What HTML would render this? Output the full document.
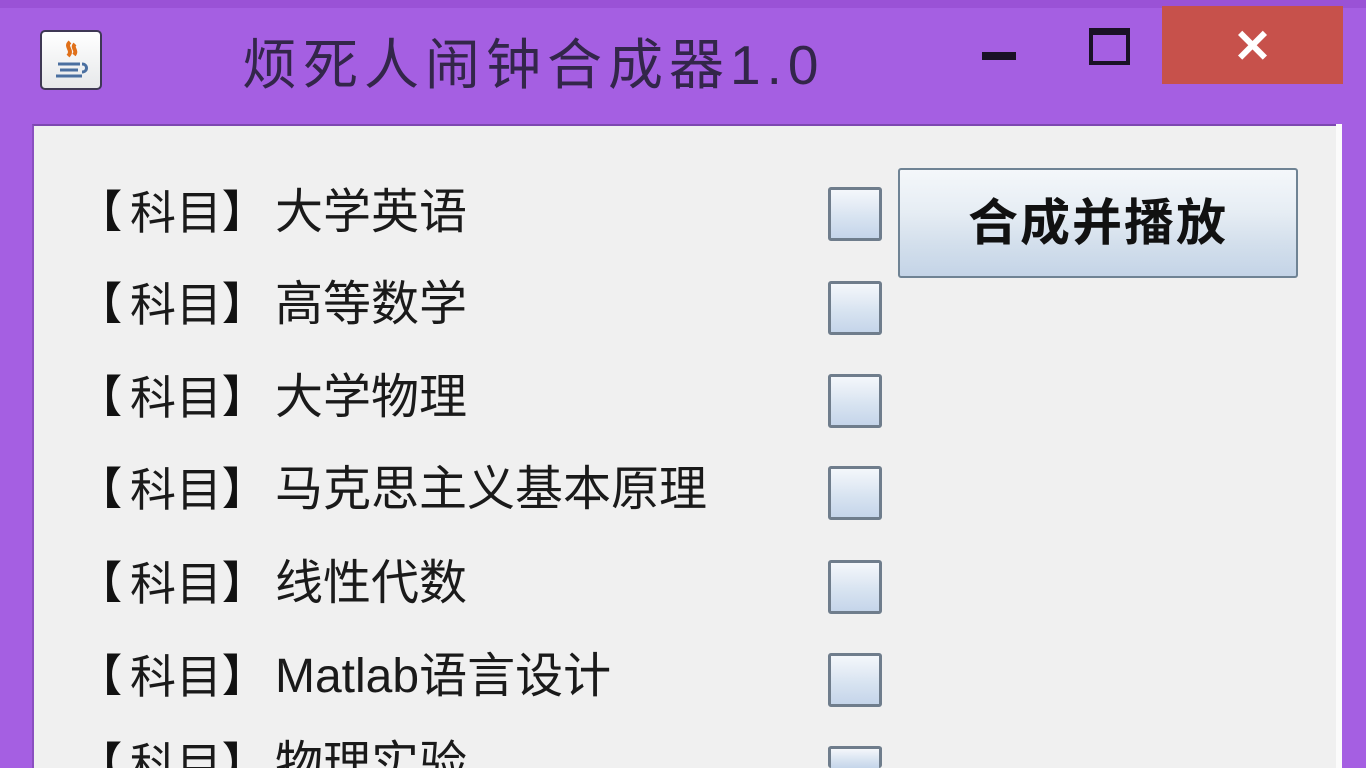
<!DOCTYPE html>
<html><head><meta charset="utf-8"><style>
html,body{margin:0;padding:0;width:1366px;height:768px;overflow:hidden;background:#a55fe2;font-family:"Liberation Sans","Noto Sans CJK SC","WenQuanYi Zen Hei",sans-serif;position:relative}
.abs{position:absolute}
#top{left:0;top:0;width:1366px;height:8px;background:#9a52d6}
#panel{left:32px;top:124px;width:1306px;height:644px;background:#f0f0f0;border-top:2px solid #7d48b0;border-left:2px solid #8a50c0;box-sizing:border-box}
#rb{left:1336px;top:124px;width:6px;height:644px;background:#fbfbfb}
.title{left:242px;top:32px;font-size:55px;letter-spacing:6px;color:#33264a;line-height:66px;white-space:nowrap}
.row{left:0;height:56px;width:800px;font-size:48px;color:#1a1a1a;line-height:56px;white-space:nowrap}
.row span{position:absolute;top:0}
.l{left:78px;font-size:44px;font-weight:bold;color:#111}
.k{left:130px;font-size:46px;letter-spacing:0}
.r{left:222px;font-size:44px;font-weight:bold;color:#111}
.s{left:275px;letter-spacing:0}
.cb{left:828px;width:48px;height:48px;border:3px solid #6f7d8c;border-radius:3px;background:linear-gradient(#f4f7fb,#d6e2f0 60%,#c5d5ea);box-sizing:content-box}
#btn{left:898px;top:168px;width:396px;height:106px;border:2px solid #6f8394;border-radius:3px;background:linear-gradient(#f4f7fa,#e6edf4 40%,#d3dfec 70%,#c4d4e7);text-align:center;line-height:106px;font-size:50px;letter-spacing:2px;font-weight:bold;color:#111}
#close{left:1162px;top:6px;width:181px;height:78px;background:#c7514b;color:#fff;text-align:center;font-size:46px;line-height:80px;font-weight:bold}
#min{left:982px;top:52px;width:34px;height:8px;background:#1a1226}
#max{left:1089px;top:28px;width:33px;height:26px;border:4px solid #1a1226;border-top-width:7px}
#icon{left:40px;top:30px;width:62px;height:60px;border-radius:5px;background:linear-gradient(#fff,#e6e8ea);border:2px solid #3e3854;box-sizing:border-box}
</style></head><body>
<div class="abs" id="top"></div>
<div class="abs" id="icon"><svg width="58" height="56" viewBox="0 0 58 56"><path d="M28 10c-6 5 4 8-2 14M33 12c-4 4 3 6-1 11" stroke="#e0701a" stroke-width="4" fill="none"/><path d="M16 32h22M18 38h18M14 44h26" stroke="#4a6fa0" stroke-width="3"/><path d="M40 32c6 0 6 8 0 8" stroke="#4a6fa0" stroke-width="3" fill="none"/></svg></div>
<div class="abs title">烦死人闹钟合成器1.0</div>
<div class="abs" id="min"></div>
<div class="abs" id="max"></div>
<div class="abs" id="close">✕</div>
<div class="abs" id="panel"></div>
<div class="abs" id="rb"></div>

<div class="abs row" style="top:185px"><span class="l">【</span><span class="k">科目</span><span class="r">】</span><span class="s">大学英语</span></div>
<div class="abs row" style="top:277px"><span class="l">【</span><span class="k">科目</span><span class="r">】</span><span class="s">高等数学</span></div>
<div class="abs row" style="top:370px"><span class="l">【</span><span class="k">科目</span><span class="r">】</span><span class="s">大学物理</span></div>
<div class="abs row" style="top:462px"><span class="l">【</span><span class="k">科目</span><span class="r">】</span><span class="s">马克思主义基本原理</span></div>
<div class="abs row" style="top:556px"><span class="l">【</span><span class="k">科目</span><span class="r">】</span><span class="s">线性代数</span></div>
<div class="abs row" style="top:649px"><span class="l">【</span><span class="k">科目</span><span class="r">】</span><span class="s">Matlab语言设计</span></div>
<div class="abs row" style="top:737px"><span class="l">【</span><span class="k">科目</span><span class="r">】</span><span class="s">物理实验</span></div>

<div class="abs cb" style="top:187px"></div>
<div class="abs cb" style="top:281px"></div>
<div class="abs cb" style="top:374px"></div>
<div class="abs cb" style="top:466px"></div>
<div class="abs cb" style="top:560px"></div>
<div class="abs cb" style="top:653px"></div>
<div class="abs cb" style="top:746px;height:19px;border-bottom:none"></div>

<div class="abs" id="btn">合成并播放</div>
</body></html>
